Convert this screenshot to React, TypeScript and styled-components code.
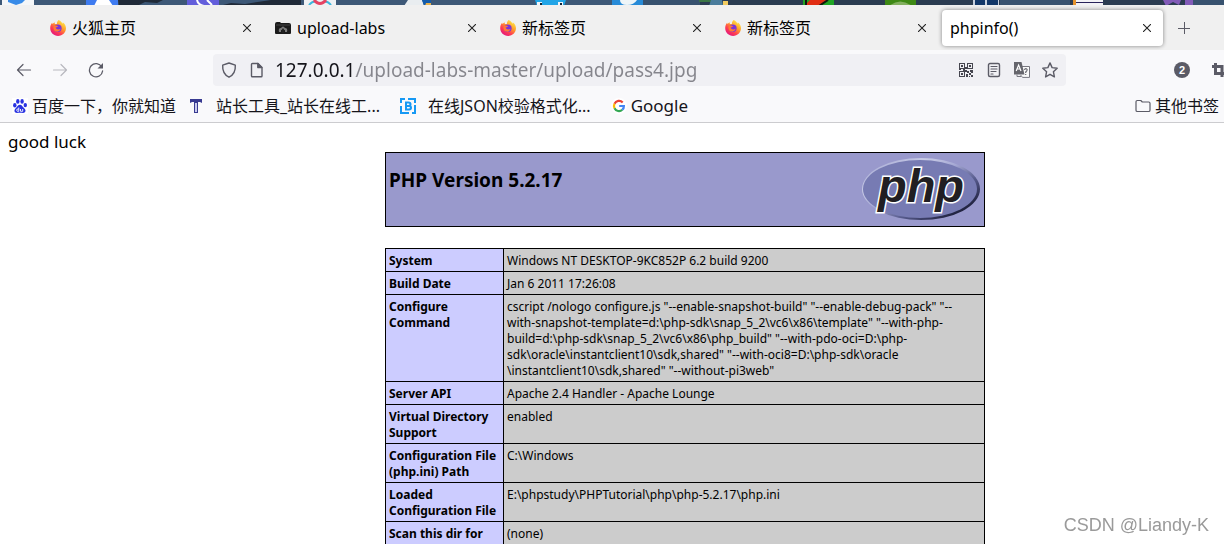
import React from "react";
import styled, { createGlobalStyle } from "styled-components";

const GlobalStyle = createGlobalStyle`
  * { box-sizing: border-box; }
  html, body, #root { height: 100%; }
  body {
    margin: 0;
    overflow: hidden;
    background: #ffffff;
    color: #000000;
    font-family: "Noto Sans", "Noto Sans CJK SC", sans-serif;
    font-size: 16px;
  }
  button, input {
    margin: 0;
    padding: 0;
    border: 0;
    background: none;
    color: inherit;
    font: inherit;
  }
  svg { display: block; flex: none; }
`;

const Browser = styled.div`
  display: flex;
  flex-direction: column;
  height: 100%;
`;

const DesktopStrip = styled.div`
  flex: none;
  height: 5px;
  overflow: hidden;
  background: #34495f;
`;

const TabBar = styled.nav`
  display: flex;
  flex: none;
  align-items: center;
  height: 45px;
  padding-left: 40px;
  background: #f0f0f0;
`;

const TabItem = styled.div<{ $active?: boolean }>`
  display: flex;
  flex: 0 1 221px;
  align-items: center;
  min-width: 0;
  height: 36px;
  margin: 0 2px;
  padding: 0 8px;
  border-radius: 4px;
  background: ${(p) => (p.$active ? "#ffffff" : "transparent")};
  box-shadow: ${(p) => (p.$active ? "0 0 4px rgba(0, 0, 0, 0.45)" : "none")};
`;

const TabTitle = styled.button`
  display: flex;
  flex: 1;
  align-items: center;
  gap: 6px;
  min-width: 0;
  height: 24px;
  font-size: 16px;
  line-height: 24px;
  white-space: nowrap;
`;

const CloseButton = styled.button`
  display: grid;
  place-items: center;
  width: 16px;
  height: 24px;
`;

const IconButton = styled.button<{ $width?: number }>`
  display: grid;
  flex: none;
  place-items: center;
  width: ${(p) => p.$width ?? 36}px;
  height: 32px;
  color: #5b5b66;
`;

const NavBar = styled.div`
  display: flex;
  flex: none;
  align-items: center;
  height: 40px;
  padding-left: 6px;
  background: #f9f9fb;
`;

const UrlBar = styled.div`
  display: flex;
  flex: 1;
  align-items: center;
  min-width: 0;
  height: 32px;
  margin-left: 99px;
  padding: 0 2px;
  border-radius: 4px;
  background: #f0f0f4;
`;

const UrlInput = styled.input`
  flex: 1;
  min-width: 0;
  height: 32px;
  margin-left: 4px;
  background: linear-gradient(to right, #15141a 81px, #85858c 81px);
  -webkit-background-clip: text;
  background-clip: text;
  color: transparent;
  font-size: 19px;
  outline: 0;
`;

const Extensions = styled.div`
  display: flex;
  flex: none;
  justify-content: flex-end;
  width: 158px;
  overflow: hidden;
`;

const ExtensionRow = styled.div`
  display: flex;
  margin-right: -12px;
`;

const BookmarkBar = styled.div`
  display: flex;
  flex: none;
  align-items: center;
  height: 33px;
  padding: 0 5px 0 12px;
  border-bottom: 1px solid #cccccf;
  background: #f9f9fb;
`;

const Bookmark = styled.a<{ $gap?: number; $after?: number; $large?: boolean }>`
  display: flex;
  flex: none;
  align-items: center;
  gap: ${(p) => p.$gap ?? 4}px;
  margin-right: ${(p) => p.$after ?? 0}px;
  color: #15141a;
  font-size: ${(p) => (p.$large ? 17 : 16)}px;
  line-height: 24px;
  text-decoration: none;
  white-space: nowrap;
`;

const Spacer = styled.div`
  flex: 1;
`;

const Page = styled.main`
  flex: 1;
  min-height: 0;
  overflow: hidden;
  padding: 8px;
`;

const Luck = styled.div`
  font-size: 17px;
  line-height: 21px;
`;

const Info = styled.div`
  display: flex;
  flex-direction: column;
  align-items: center;
  gap: 21px;
  padding-left: 146px;
`;

const InfoHeader = styled.header`
  display: flex;
  align-items: flex-start;
  justify-content: space-between;
  width: 600px;
  height: 75px;
  padding: 3px;
  border: 1px solid #000000;
  background: #9999cc;
`;

const Title = styled.h1`
  margin: 12px 0 0;
  font-size: 19px;
  font-weight: 700;
  line-height: 24px;
`;

const InfoTable = styled.table`
  width: 600px;
  border-collapse: collapse;
  table-layout: fixed;
  font-size: 12px;
  line-height: 16px;
`;

const Key = styled.th`
  width: 118px;
  padding: 4px 3px 2px;
  border: 1px solid #000000;
  background: #ccccff;
  font-weight: 700;
  text-align: left;
  vertical-align: top;
  white-space: pre;
`;

const Value = styled.td`
  padding: 4px 3px 2px;
  border: 1px solid #000000;
  background: #cccccc;
  vertical-align: top;
  white-space: pre;
`;

const Watermark = styled.div`
  position: fixed;
  right: 15px;
  bottom: 7px;
  color: #9a9a9a;
  font-family: "Liberation Sans", sans-serif;
  font-size: 18px;
  line-height: 24px;
`;

const Desktop = () => (
  <svg width="100%" height="6" viewBox="0 0 1224 6" preserveAspectRatio="none" aria-hidden="true">
    <rect width="1224" height="6" fill="#3d5877" />
    <path d="M118 0h45l-6 3-12-1-8 4h-18zM219 6l12-3 14 1 26-4h30v6z" fill="#202a38" />
    <path d="M640 0h584v6H640z" fill="#2b3c51" />
    <path d="M640 0h60v6h-60zM1000 0h70v6h-70zM1193 0h31v6h-31z" fill="#38526f" />
    <path d="M2 0h32v6H2z" fill="#f4f6f8" />
    <path d="M8 0h17l-3 3-6 2-8-3z" fill="#388be8" />
    <path d="M86 0h32v6H86z" fill="#3e7bf0" />
    <path d="M97 0h12l4 6H94z" fill="#fff" />
    <path d="M187 0h32v6h-32z" fill="#635edb" />
    <path d="M197 0q1 5 7 6M207 0l5 5" stroke="#fff" strokeWidth="2" fill="none" />
    <path d="M304 0h32v6h-32z" fill="#eef1f4" />
    <path d="M309 5q4-5 8-3M331 5q-4-5-8-3" stroke="#3cb6dc" strokeWidth="2" fill="none" />
    <path d="M314 0q6 7 12 0" stroke="#e64262" strokeWidth="3" fill="none" />
    <path d="M404 6l4-6h14l2 5z" fill="#e9edf0" />
    <path d="M422 0h9v6h-7z" fill="#155cab" />
    <path d="M426 3h5v3h-6z" fill="#eab24c" />
    <path d="M535 0h31l-2 6h-27z" fill="#22a5e7" />
    <path d="M537 2h5v3h-5zM558 2h5v3h-5z" fill="#f0f5fa" />
    <path d="M540 3h2v2h-2zM560 3h2v2h-2z" fill="#123" />
    <path d="M612 0h31v6h-31z" fill="#278bd8" />
    <path d="M620 0h17q-3 5-10 5t-7-5z" fill="#eef5f8" />
    <path d="M699 0h12v2h-12z" fill="#3b7545" />
    <path d="M711 0h11l1 6h-14z" fill="#4a7c9c" />
    <path d="M723 1h5v5h-5z" fill="#f2cc61" />
    <path d="M803 0h31v6h-31z" fill="#20a524" />
    <path d="M810 0h17l-9 6h-14z" fill="#e12d13" />
    <path d="M828 0l-9 6M806 0v6" stroke="#11170d" strokeWidth="2" />
    <path d="M885 0h31v6h-31z" fill="#3e8915" />
    <path d="M889 6q11-9 23 0" fill="#83b05f" />
    <path d="M973 0h26v6h-26z" fill="#c7d0dd" />
    <path d="M975 0h10v5h-10zM987 0h11v5h-11z" fill="#123768" />
    <path d="M1073 0h30v6h-30z" fill="#f2f2f5" />
    <path d="M1073 0h3v6h-3z" fill="#e6932c" />
    <path d="M1076 2h27v1h-27z" fill="#28235a" />
    <path d="M1163 0h18l-2 5-6-3-7 4zM1185 0h8v6h-8z" fill="#825bb8" />
  </svg>
);

const Firefox = () => (
  <svg width="16" height="16" viewBox="0 0 16 16" aria-hidden="true">
    <defs>
      <linearGradient id="fx" x1=".85" y1=".1" x2=".25" y2=".95">
        <stop offset="0" stopColor="#ffe946" />
        <stop offset=".4" stopColor="#ff9a2c" />
        <stop offset=".7" stopColor="#ff4050" />
        <stop offset="1" stopColor="#e5187c" />
      </linearGradient>
    </defs>
    <path d="M8.7 0c2 1 3.3 2.4 3.7 3.8.4-.5.4-1 .3-1.6C14.9 3.8 16 6 16 8.300c0 4.200-3.500 7.600-7.900 7.600S.2 12.600.2 8.300c0-2 .6-4 1.900-5.500L2.500 4l2-1.700.4 1.800c.7-.3 1.200-.2 2 0C6.900 2.200 7.500.9 8.700 0z" fill="url(#fx)" />
    <circle cx="7.900" cy="8.200" r="3.700" fill="#7a35d8" />
    <path d="M3.800 6.200c1.700-1.300 3.300-.6 4.500.2-1.300.1-1.600.9-2.700 1.200.6 2.300 3.500 2.500 5 1-.3 2-2 3.300-4 3-2.400-.4-3.700-2.700-2.800-5.400z" fill="#ff7a35" />
  </svg>
);

const UploadFolder = () => (
  <svg width="16" height="16" viewBox="0 0 16 16" aria-hidden="true">
    <path d="M0 4q0-2 2-2h3l1 1h8q2 0 2 2v8q0 1-1 1H1q-1 0-1-1z" fill="#1b1b1b" />
    <path d="M1 5h14" stroke="#444" />
    <path d="M4 12q-1-4 2-4 2-3 4 0 3 0 2 4h-2v-2H6v2z" fill="#7b7b7b" />
    <path d="M8 8l2 3H9v2H7v-2H6z" fill="#222" />
  </svg>
);

const Close = () => (
  <svg width="8" height="8" viewBox="0 0 8 8" aria-hidden="true">
    <path d="M0 0l8 8M8 0L0 8" stroke="#222" strokeWidth="1.100" />
  </svg>
);

const line = { fill: "none", stroke: "currentColor", strokeWidth: 1.2, strokeLinecap: "round", strokeLinejoin: "round" } as const;

const Back = () => (
  <svg width="16" height="16" viewBox="0 0 16 16" {...line}><path d="M14.500 8H1.500M7 2.500L1.500 8 7 13.500" /></svg>
);
const Forward = () => (
  <svg width="16" height="16" viewBox="0 0 16 16" {...line} stroke="#b9b9bf"><path d="M1.500 8h13M9 2.500L14.500 8 9 13.500" /></svg>
);
const Reload = () => (
  <svg width="16" height="16" viewBox="0 0 16 16" {...line}>
    <path d="M13.800 5A6.600 6.600 0 1 0 14.600 9" strokeWidth="1.300" />
    <path d="M15 1v5.500H9.500z" fill="currentColor" stroke="none" />
  </svg>
);
const Shield = () => (
  <svg width="16" height="16" viewBox="0 0 16 16" {...line} strokeWidth={1.4}>
    <path d="M8 1L1.700 3.200C1.300 9 3.300 12.800 8 15.200 12.700 12.800 14.700 9 14.300 3.200z" />
  </svg>
);
const Doc = () => (
  <svg width="16" height="16" viewBox="0 0 16 16" {...line} strokeWidth={1.4}>
    <path d="M3.500 1.500h5.500l4 4v8.500q0 .8-.8.8H3.300q-.8 0-.8-.8V2.300q0-.8 1-.8z" /><path d="M8.800 1.500v4h4z" fill="currentColor" />
  </svg>
);
const Qr = () => (
  <svg width="14" height="14" viewBox="0 0 14 14" fill="#45454f" shapeRendering="crispEdges">
    <path fillRule="evenodd" d="M0 0h6v6H0zM1 1v4h4V1zM8 0h6v6H8zM9 1v4h4V1zM0 8h6v6H0zM1 9v4h4V9z" />
    <path d="M2 2h2v2H2zM10 2h2v2h-2zM2 10h2v2H2zM6 4h2v2H6zM6 7h2v2H6zM0 6h2v1H0zM4 6h2v2H4zM8 8h2v2H8zM11 7h3v2h-3zM10 10h2v2h-2zM12 9h2v1h-2zM7 11h2v3H7zM12 12h2v2h-2zM10 13h1v1h-1z" />
  </svg>
);
const Reader = () => (
  <svg width="16" height="16" viewBox="0 0 16 16" {...line}>
    <rect x="2.500" y="1.500" width="11" height="13" rx="1.500" strokeWidth="1.400" /><path d="M5 4.500h6M5 7h6M5 9.500h5M5 12h2" />
  </svg>
);
const Translate = () => (
  <svg width="16" height="16" viewBox="0 0 16 16" aria-hidden="true">
    <path d="M7.500 4.500h8v10.900h-7l-2-2.500" fill="#fafafa" stroke="#777780" />
    <path d="M0 0h7.500l3 12.500H0z" fill="#65656c" />
    <path d="M2.200 9L4.600 3l2.400 6M3 7h3.200" fill="none" stroke="#fff" strokeWidth="1.200" />
    <path d="M10.500 8q.3-1.500 1.700-1.300 1.600.5.500 2.200l-1 1.100v1M11.700 12v1" fill="none" stroke="#686870" strokeWidth="1.200" />
    <path d="M3 12.500v2h4" fill="none" stroke="#777780" />
  </svg>
);
const Star = () => (
  <svg width="16" height="16" viewBox="0 0 16 16" {...line} strokeWidth={1.4}>
    <path d="M8 .9l2.100 4.700 5.100.6-3.800 3.500 1 5.200L8 12.300l-4.400 2.600 1-5.200L.8 6.200l5.100-.6z" />
  </svg>
);
const Plus = () => (
  <svg width="12" height="12" viewBox="0 0 12 12" {...line} strokeWidth={1} strokeLinecap="butt"><path d="M6.500 0v12M0 6.500h12" /></svg>
);
const Badge = styled.span`
  display: grid;
  place-items: center;
  width: 16px;
  height: 16px;
  border-radius: 8px;
  background: #5b5b66;
  color: #ffffff;
  font: 700 11px/16px "Liberation Sans", sans-serif;
`;
const Crop = () => (
  <svg width="16" height="16" viewBox="0 0 16 16" fill="none" stroke="#5b5b66" strokeWidth="3">
    <path d="M5.500 1v10.500H15M2 4.500h10V15" />
  </svg>
);
const Baidu = () => (
  <svg width="16" height="16" viewBox="0 0 16 16" aria-hidden="true">
    <rect width="16" height="16" fill="#fff" />
    <g fill="#2932e1">
      <ellipse cx="2.800" cy="7.300" rx="1.700" ry="2.200" /><ellipse cx="5.800" cy="3.400" rx="1.700" ry="2.300" />
      <ellipse cx="10.100" cy="3.400" rx="1.700" ry="2.300" /><ellipse cx="13.300" cy="7.100" rx="1.700" ry="2.200" />
      <path d="M8 6.800c2 0 2.500 2 4 3.200 2.800 2.400 1.300 5-1 4.900-2-.2-4-.2-6 0-2.600 0-3.600-3-1-5C5.500 8.700 6 6.800 8 6.800z" />
    </g>
    <path d="M6.800 9.500v3.800H5.300q-1.200-1.200 0-2.300h1.500M8.500 11v2.300h2.200V11" fill="none" stroke="#fff" strokeWidth=".9" />
  </svg>
);
const Tools = () => (
  <svg width="16" height="16" viewBox="0 0 16 16" aria-hidden="true">
    <path d="M2 1h12v4l-2-1h-2v11H6V4H4L2 5z" fill="#383a91" /><path d="M8 5v9" stroke="#c9cbee" strokeWidth="2" />
  </svg>
);
const Json = () => (
  <svg width="16" height="16" viewBox="0 0 16 16" fill="none" stroke="#1699f4" strokeWidth="2">
    <path d="M1 5V1h4M8 1h7v4M15 7v8h-3M9 15H1V8" /><path d="M6 4.500h2.500q2 0 2 1.700T8.500 8H6zM6 8h3q2 0 2 1.700T9 11.500H6z" />
  </svg>
);
const Google = () => (
  <svg width="16" height="16" viewBox="0 0 16 16" fill="none" strokeWidth="2.200">
    <circle cx="8" cy="8" r="8" fill="#fff" />
    <path d="M11.700 4.400A5 5 0 0 0 3.500 5.800" stroke="#ea4335" />
    <path d="M3.500 5.800a5 5 0 0 0 0 4.500" stroke="#fbbc05" />
    <path d="M3.500 10.300a5 5 0 0 0 7.800 1.500" stroke="#34a853" />
    <path d="M11.300 11.800Q13 10.200 12.900 8H8.200" stroke="#4285f4" />
  </svg>
);
const Folder = () => (
  <svg width="16" height="16" viewBox="0 0 16 16" {...line} stroke="#5b5b66">
    <path d="M2.300 2.500h3.500l1.500 1.500h6.400q1.300 0 1.300 1.300v6.900q0 1.300-1.300 1.300H2.300Q1 13.500 1 12.200V3.800q0-1.300 1.300-1.300z" />
  </svg>
);

const PhpLogo = () => (
  <svg width="120" height="67" viewBox="0 0 120 67" role="img" aria-label="PHP logo">
    <defs>
      <linearGradient id="rim" x1="0" y1="0" x2="1" y2="1">
        <stop offset="0" stopColor="#9a9dce" />
        <stop offset=".28" stopColor="#c9cce6" />
        <stop offset=".45" stopColor="#a5a8d4" />
        <stop offset=".65" stopColor="#565a8c" />
        <stop offset=".85" stopColor="#20223f" />
        <stop offset="1" stopColor="#50547f" />
      </linearGradient>
    </defs>
    <ellipse cx="60" cy="33" rx="59" ry="31" fill="url(#rim)" />
    <ellipse cx="59" cy="33" rx="57" ry="29" fill="#777bb3" />
    <text x="60" y="46" textAnchor="middle" fontFamily="Liberation Sans" fontWeight="700" fontStyle="italic" fontSize="47" fill="#211e22" stroke="#fff" strokeWidth="3" paintOrder="stroke">php</text>
  </svg>
);

const tabs = [
  { title: "火狐主页", icon: <Firefox /> },
  { title: "upload-labs", icon: <UploadFolder /> },
  { title: "新标签页", icon: <Firefox /> },
  { title: "新标签页", icon: <Firefox /> },
  { title: "phpinfo()", active: true },
];

const rows = [
  ["System", "Windows NT DESKTOP-9KC852P 6.2 build 9200"],
  ["Build Date", "Jan 6 2011 17:26:08"],
  [
    "Configure\nCommand",
    'cscript /nologo configure.js "--enable-snapshot-build" "--enable-debug-pack" "--\nwith-snapshot-template=d:\\php-sdk\\snap_5_2\\vc6\\x86\\template" "--with-php-\nbuild=d:\\php-sdk\\snap_5_2\\vc6\\x86\\php_build" "--with-pdo-oci=D:\\php-\nsdk\\oracle\\instantclient10\\sdk,shared" "--with-oci8=D:\\php-sdk\\oracle\n\\instantclient10\\sdk,shared" "--without-pi3web"',
  ],
  ["Server API", "Apache 2.4 Handler - Apache Lounge"],
  ["Virtual Directory\nSupport", "enabled"],
  ["Configuration File\n(php.ini) Path", "C:\\Windows"],
  ["Loaded\nConfiguration File", "E:\\phpstudy\\PHPTutorial\\php\\php-5.2.17\\php.ini"],
  ["Scan this dir for", "(none)"],
];

export default function App() {
  return (
    <Browser>
      <GlobalStyle />
      <DesktopStrip><Desktop /></DesktopStrip>
      <TabBar>
        {tabs.map((tab, i) => (
          <TabItem key={i} $active={tab.active}>
            <TabTitle>{tab.icon}{tab.title}</TabTitle>
            <CloseButton aria-label="Close tab"><Close /></CloseButton>
          </TabItem>
        ))}
        <IconButton $width={38} aria-label="New tab"><Plus /></IconButton>
      </TabBar>
      <NavBar>
        <IconButton aria-label="Back"><Back /></IconButton>
        <IconButton aria-label="Forward"><Forward /></IconButton>
        <IconButton aria-label="Reload"><Reload /></IconButton>
        <UrlBar>
          <IconButton $width={28} aria-label="Protection"><Shield /></IconButton>
          <IconButton $width={28} aria-label="Site information"><Doc /></IconButton>
          <UrlInput aria-label="Address" defaultValue="127.0.0.1/upload-labs-master/upload/pass4.jpg" />
          <IconButton $width={28} aria-label="QR code"><Qr /></IconButton>
          <IconButton $width={28} aria-label="Reader view"><Reader /></IconButton>
          <IconButton $width={28} aria-label="Translate"><Translate /></IconButton>
          <IconButton $width={28} aria-label="Bookmark"><Star /></IconButton>
        </UrlBar>
        <Extensions>
          <ExtensionRow>
            <IconButton aria-label="Extension alerts"><Badge>2</Badge></IconButton>
            <IconButton aria-label="Screenshot"><Crop /></IconButton>
          </ExtensionRow>
        </Extensions>
      </NavBar>
      <BookmarkBar>
        <Bookmark href="#baidu" $after={12}><Baidu />百度一下，你就知道</Bookmark>
        <Bookmark href="#tools" $gap={12} $after={20}><Tools />站长工具_站长在线工...</Bookmark>
        <Bookmark href="#json" $gap={12} $after={20}><Json />在线JSON校验格式化...</Bookmark>
        <Bookmark href="#google" $large><Google />Google</Bookmark>
        <Spacer />
        <Bookmark href="#other"><Folder />其他书签</Bookmark>
      </BookmarkBar>
      <Page>
        <Luck>good luck</Luck>
        <Info>
          <InfoHeader>
            <Title>PHP Version 5.2.17</Title>
            <PhpLogo />
          </InfoHeader>
          <InfoTable>
            <tbody>
              {rows.map(([key, value]) => (
                <tr key={key}><Key scope="row">{key}</Key><Value>{value}</Value></tr>
              ))}
            </tbody>
          </InfoTable>
        </Info>
      </Page>
      <Watermark>CSDN @Liandy-K</Watermark>
    </Browser>
  );
}
